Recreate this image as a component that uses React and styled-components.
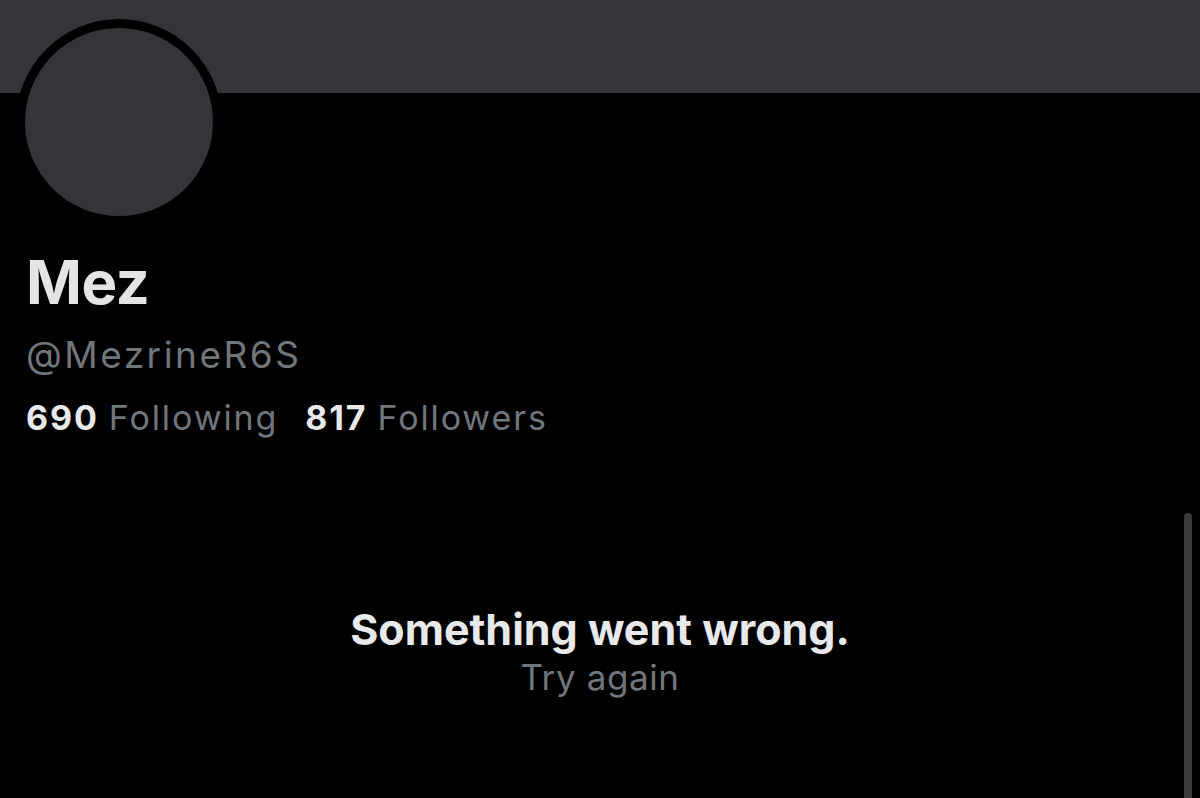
import React from "react";
import styled, { createGlobalStyle } from "styled-components";

const Global = createGlobalStyle`
  html, body { margin: 0; padding: 0; background: #000; }
  body { font-family: Inter, "Noto Sans", sans-serif; }
`;

const Page = styled.div`
  position: relative;
  width: 1200px;
  height: 798px;
  background: #000;
  overflow: hidden;
  display: flex;
  flex-direction: column;
`;

const Banner = styled.div`
  height: 93px;
  background: #333539;
  flex-shrink: 0;
`;

const Profile = styled.div`
  display: flex;
  flex-direction: column;
  align-items: flex-start;
  padding-left: 26px;
`;

const Avatar = styled.div`
  width: 188px;
  height: 188px;
  margin-top: -74px;
  margin-left: -10px;
  border-radius: 50%;
  background: #333539;
  border: 9px solid #000;
`;

const Name = styled.div`
  margin-top: 25px;
  font-size: 60px;
  line-height: 64px;
  font-weight: 700;
  color: #e2e4e5;
  letter-spacing: -0.5px;
`;

const Handle = styled.div`
  margin-top: 19px;
  font-size: 37px;
  line-height: 44px;
  letter-spacing: 2.5px;
  color: #71767b;
`;

const Stats = styled.div`
  display: flex;
  gap: 27px;
  margin-top: 21px;
  font-size: 34px;
  line-height: 40px;
  letter-spacing: 1.9px;
`;

const Stat = styled.span`
  color: #71767b;
  b { color: #e7e9ea; font-weight: 700; margin-right: 10px; }
`;

const ErrorBox = styled.div`
  display: flex;
  flex-direction: column;
  align-items: center;
  margin-top: 165px;
`;

const ErrorTitle = styled.div`
  font-size: 43px;
  line-height: 52px;
  font-weight: 700;
  color: #e7e9ea;
`;

const Retry = styled.div`
  font-size: 35px;
  line-height: 44px;
  letter-spacing: 0.6px;
  color: #71767b;
`;

const Scrollbar = styled.div`
  position: absolute;
  right: 8px;
  top: 513px;
  bottom: 0;
  width: 8px;
  border-radius: 4px 4px 0 0;
  background: #3a3a3c;
`;

export default function App() {
  return (
    <Page>
      <Global />
      <Banner />
      <Profile>
        <Avatar />
        <Name>Mez</Name>
        <Handle>@MezrineR6S</Handle>
        <Stats>
          <Stat><b>690</b>Following</Stat>
          <Stat><b>817</b>Followers</Stat>
        </Stats>
      </Profile>
      <ErrorBox>
        <ErrorTitle>Something went wrong.</ErrorTitle>
        <Retry>Try again</Retry>
      </ErrorBox>
      <Scrollbar />
    </Page>
  );
}
